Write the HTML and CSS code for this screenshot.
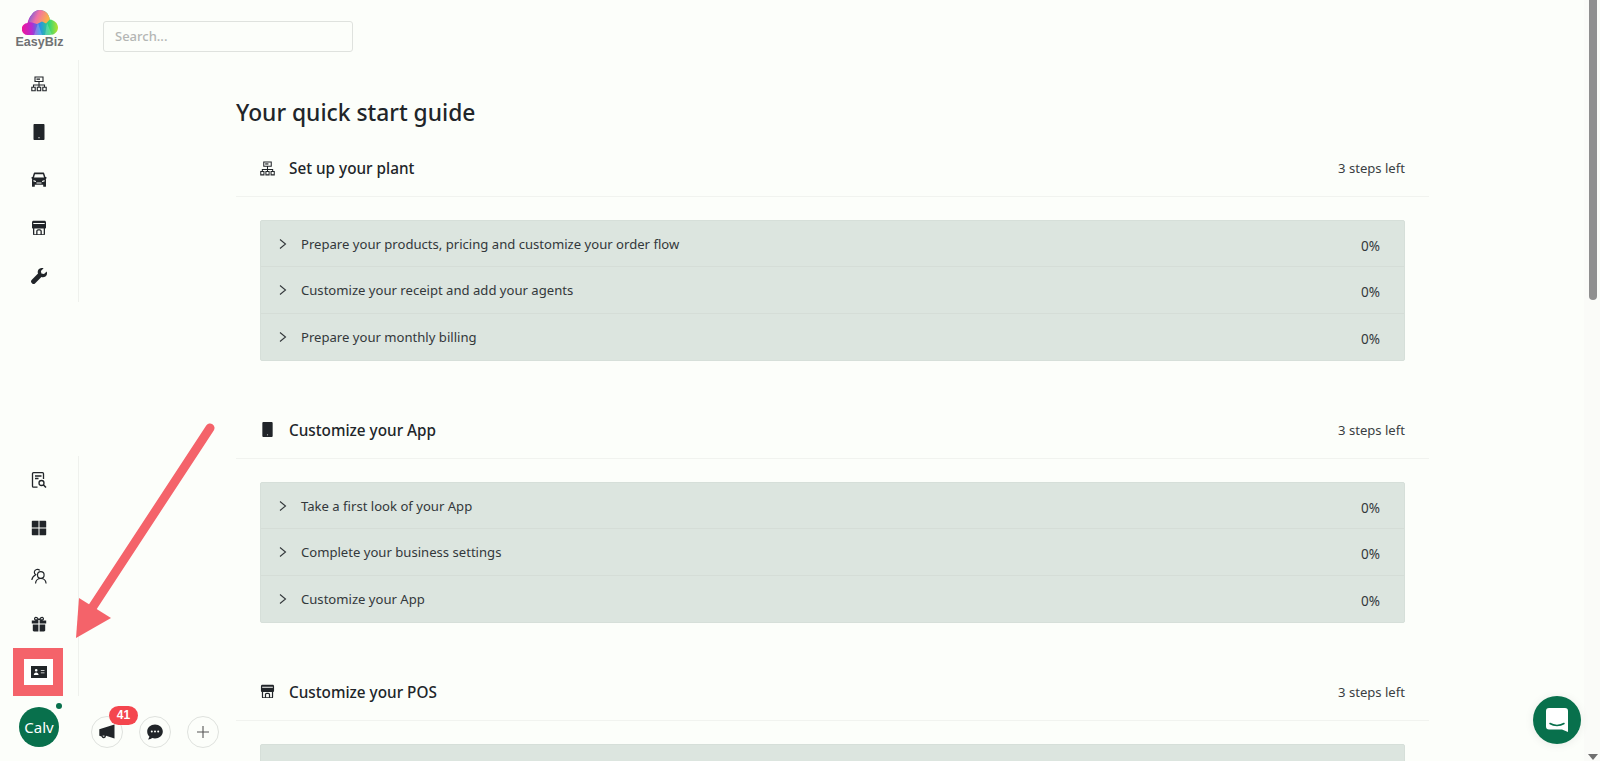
FILE: index.html
```html
<!DOCTYPE html>
<html lang="en">
<head>
    <meta charset="UTF-8">
    <meta name="viewport" content="width=device-width, initial-scale=1.0">
    <title>EasyBiz - Your quick start guide</title>
    <link rel="stylesheet" href="styles.css">
</head>
<body>
    <svg class="icon-defs" width="0" height="0">
        <defs>
            <linearGradient id="cloud-fill" x1="0" y1="0" x2="1" y2="0">
                <stop offset="0" stop-color="#f0169a"/>
                <stop offset="0.28" stop-color="#b62bd0"/>
                <stop offset="0.5" stop-color="#2a8fe8"/>
                <stop offset="0.75" stop-color="#2fd67a"/>
                <stop offset="1" stop-color="#b9e02c"/>
            </linearGradient>
            <linearGradient id="cloud-top" x1="0" y1="0" x2="1" y2="0.3">
                <stop offset="0" stop-color="#4a5be8"/>
                <stop offset="0.5" stop-color="#f26fa6"/>
                <stop offset="1" stop-color="#f9b04a"/>
            </linearGradient>
            <symbol id="i-plant" viewBox="0 0 16 16">
                <path fill="none" stroke="currentColor" stroke-width="1.100" d="M4 1h8v4.500H4zM8 5.500V9M2.500 11V9h11v2M8 9v2M.8 11.200h3.400v3.600H.8zM6.300 11.200h3.400v3.600H6.300zM11.800 11.200h3.400v3.600h-3.400z"/>
                <path fill="currentColor" d="M5.500 2.500h3.500v1.300H5.500z"/>
            </symbol>
            <symbol id="i-phone" viewBox="0 0 16 16">
                <path fill="currentColor" fill-rule="evenodd" d="M3.500 0h9c.6 0 1 .4 1 1v14c0 .6-.4 1-1 1h-9c-.6 0-1-.4-1-1V1c0-.6.4-1 1-1zM7.400 13.200v1h1.200v-1z"/>
            </symbol>
            <symbol id="i-car" viewBox="0 0 16 16">
                <path transform="translate(0 -2.750) scale(1 1.300)" fill="currentColor" fill-rule="evenodd" d="M3.900 2.500h8.200c.6 0 1.100.4 1.300.9l1 2.600h1v1.200l-.6.300c.2.400.2.700.2 1.100v4.400c0 .3-.2.500-.5.500h-1.800c-.3 0-.5-.2-.5-.5V12H3.800v1c0 .3-.2.500-.5.500H1.500c-.3 0-.5-.2-.5-.5V8.600c0-.4 0-.7.200-1.100L.6 7.200V6h1l1-2.600c.2-.5.7-.9 1.300-.9zM4 3.800 3 6.400h10l-1-2.600zM2.500 8.200v1.200l2.500.4V9zM13.500 8.200 11 9v.8l2.500-.4zM5.500 10.200v.8h5v-.8z"/>
            </symbol>
            <symbol id="i-store" viewBox="0 0 16 16">
                <path fill="currentColor" fill-rule="evenodd" d="M2.500 .8h11c.8 0 1.500.7 1.500 1.500v5.200c0 .6-.4 1-1 1v5.500c0 .6-.4 1-1 1H3c-.6 0-1-.4-1-1V8.500c-.6 0-1-.4-1-1V2.300C1 1.500 1.700.8 2.500.8zM2.300 3v.9h11.400V3zM3.300 8.500v5.700h1.900v-2.900c0-1 .8-2 2-2h1.600c1.200 0 2 1 2 2v2.900h1.900V8.500zM6.500 11.300v2.900h3v-2.900c0-.4-.3-.7-.7-.7H7.200c-.4 0-.7.300-.7.700z"/>
            </symbol>
            <symbol id="i-wrench" viewBox="0 0 16 16">
                <path fill="currentColor" d="M15.700 3.400 13 6.100l-2.600-.5-.5-2.600L12.600.3C10.700-.4 8.600.1 7.500 1.600 6.600 2.800 6.500 4.300 7 5.600L.6 12c-.8.800-.8 2 0 2.800l.6.600c.8.800 2 .8 2.800 0l6.400-6.400c1.300.5 2.800.4 4-.5 1.500-1.100 2-3.200 1.300-5.100z"/>
            </symbol>
            <symbol id="i-report" viewBox="0 0 16 16">
                <path fill="none" stroke="currentColor" stroke-width="1.300" d="M6.500 15.200H2.500a1 1 0 0 1-1-1V1.700a1 1 0 0 1 1-1h9a1 1 0 0 1 1 1V7"/>
                <path fill="none" stroke="currentColor" stroke-width="1.300" d="M4 4h6.500M4 6.500h3.500"/>
                <circle cx="10.500" cy="11" r="2.500" fill="none" stroke="currentColor" stroke-width="1.300"/>
                <path fill="none" stroke="currentColor" stroke-width="1.500" d="m12.300 12.800 2.700 2.700"/>
            </symbol>
            <symbol id="i-grid" viewBox="0 0 16 16">
                <path fill="currentColor" d="M.8 1.500c0-.4.300-.7.700-.7h6v6.700H.8zM8.500.8h6c.4 0 .7.300.7.700v6H8.500zM.8 8.500h6.700v6.700h-6c-.4 0-.7-.3-.7-.7zM8.500 8.500h6.700v6c0 .4-.3.700-.7.700h-6z"/>
            </symbol>
            <symbol id="i-users" viewBox="0 0 16 16">
                <g fill="none" stroke="currentColor" stroke-width="1.200">
                    <circle cx="9.800" cy="7" r="3.300"/>
                    <path d="M4.500 15.500c.3-3 2.400-5 5.300-5s5 2 5.300 5"/>
                    <path d="M8.800 2.400A3.200 3.200 0 0 0 3.300 4c0 1.200.6 2.100 1.400 2.700C2.600 7.700 1.200 9.500.8 12"/>
                </g>
            </symbol>
            <symbol id="i-gift" viewBox="0 0 16 16">
                <path fill="currentColor" fill-rule="evenodd" d="M.8 4.500h6.600v3H.8zM8.600 4.500h6.600v3H8.600zM1.800 8.500h5.600v7H3c-.7 0-1.200-.5-1.200-1.200zM8.600 8.500h5.600v5.800c0 .7-.5 1.200-1.200 1.200H8.600zM8 4l-1.400.5H4.800C3.600 4.500 3 3.700 3 2.800S3.700.8 4.800.8C6.300.8 7.400 2 8 3.200 8.600 2 9.700.8 11.200.8 12.300.8 13 1.900 13 2.800s-.6 1.700-1.800 1.700H9.400zM4.800 2c-.4 0-.6.400-.6.800s.2.500.6.500h1.700C6.100 2.700 5.500 2 4.800 2zM11.200 2c-.7 0-1.300.7-1.700 1.300h1.700c.4 0 .6-.1.600-.5s-.2-.8-.6-.8z"/>
            </symbol>
            <symbol id="i-card" viewBox="0 0 16 12">
                <path fill="currentColor" fill-rule="evenodd" d="M0 0h16v12H0zM5.200 3a1.300 1.300 0 1 0 0 2.600 1.300 1.300 0 0 0 0-2.600zM2.800 9h4.800C7.500 7.500 6.500 6.400 5.200 6.400S2.900 7.500 2.800 9zM9.800 4.200v.8h3.700v-.8zM9.800 6.500v.8h3.700v-.8z"/>
            </symbol>
            <symbol id="i-horn" viewBox="0 0 16 16">
                <path fill="currentColor" fill-rule="evenodd" d="M15.500 .5v14L7 11.800v.2a2.300 2.300 0 0 1-4.500.6L.3 11.800V5.300zM3.700 11.500c0 .3 0 .5.100.7a1.100 1.100 0 0 0 2-.5z"/>
            </symbol>
            <symbol id="i-dots" viewBox="0 0 16 16">
                <path fill="currentColor" fill-rule="evenodd" d="M8 .5c4.300 0 7.800 3 7.800 7S12.300 14.500 8 14.500c-1 0-2-.2-2.800-.5-.9.700-2.300 1.400-4.200 1.500.7-.8 1.300-2 1.400-3C.9 11.300.2 9.500.2 7.500.2 3.500 3.700.5 8 .5zM4.800 6.600a1 1 0 1 0 0 2 1 1 0 0 0 0-2zM8 6.600a1 1 0 1 0 0 2 1 1 0 0 0 0-2zM11.200 6.600a1 1 0 1 0 0 2 1 1 0 0 0 0-2z"/>
            </symbol>
            <symbol id="i-chev" viewBox="0 0 8 10">
                <path fill="none" stroke="currentColor" stroke-width="1.100" d="m1 .5 5.500 4.500L1 9.500"/>
            </symbol>
        </defs>
    </svg>

    <aside class="sidebar">
        <div class="logo">
            <svg class="logo-cloud" viewBox="0 0 36 25">
                <path fill="url(#cloud-fill)" d="M6 25a6 6 0 0 1-.5-12C6.500 9 8 6.500 9.500 5 11.500 1.800 14.500 0 18 0c5 0 8.800 3.500 9.800 9.500C32.500 10 36 13.500 36 17.500c0 4.300-3.500 7.500-8 7.500z"/>
                <path fill="url(#cloud-top)" d="M9.500 5C11.500 1.800 14.500 0 18 0c5 0 8.800 3.500 9.800 9.500l-3.800 4-4-2-5 2.500-5-1.500-3.500-.5C7 9.500 8 6.500 9.500 5z"/>
                <path fill="#fff" opacity="0.2" d="M12 25 16 13l4 12zM23 25l2-12 5 12z"/>
            </svg>
            <span class="logo-name">EasyBiz</span>
        </div>
        <nav class="side-nav side-nav-top">
            <a class="side-item"><svg class="side-icon"><use href="#i-plant"/></svg></a>
            <a class="side-item"><svg class="side-icon"><use href="#i-phone"/></svg></a>
            <a class="side-item"><svg class="side-icon"><use href="#i-car"/></svg></a>
            <a class="side-item"><svg class="side-icon"><use href="#i-store"/></svg></a>
            <a class="side-item"><svg class="side-icon"><use href="#i-wrench"/></svg></a>
        </nav>
        <nav class="side-nav side-nav-bottom">
            <a class="side-item"><svg class="side-icon"><use href="#i-report"/></svg></a>
            <a class="side-item"><svg class="side-icon"><use href="#i-grid"/></svg></a>
            <a class="side-item"><svg class="side-icon"><use href="#i-users"/></svg></a>
            <a class="side-item"><svg class="side-icon"><use href="#i-gift"/></svg></a>
            <a class="side-item"><span class="mark"></span><svg class="side-icon card-icon"><use href="#i-card"/></svg></a>
        </nav>
        <div class="avatar-row">
            <div class="avatar">Calv<span class="avatar-dot"></span></div>
        </div>
    </aside>

    <div class="page">
        <div class="topbar">
            <input class="search" type="text" placeholder="Search...">
        </div>
        <main class="guide">
            <h1>Your quick start guide</h1>

            <section class="guide-section">
                <div class="section-head">
                    <svg class="head-icon"><use href="#i-plant"/></svg>
                    <h2>Set up your plant</h2>
                    <span class="steps">3 steps left</span>
                </div>
                <div class="step-list">
                    <div class="step"><svg class="chev"><use href="#i-chev"/></svg><span class="step-name">Prepare your products, pricing and customize your order flow</span><span class="pct">0%</span></div>
                    <div class="step"><svg class="chev"><use href="#i-chev"/></svg><span class="step-name">Customize your receipt and add your agents</span><span class="pct">0%</span></div>
                    <div class="step"><svg class="chev"><use href="#i-chev"/></svg><span class="step-name">Prepare your monthly billing</span><span class="pct">0%</span></div>
                </div>
            </section>

            <section class="guide-section">
                <div class="section-head">
                    <svg class="head-icon"><use href="#i-phone"/></svg>
                    <h2>Customize your App</h2>
                    <span class="steps">3 steps left</span>
                </div>
                <div class="step-list">
                    <div class="step"><svg class="chev"><use href="#i-chev"/></svg><span class="step-name">Take a first look of your App</span><span class="pct">0%</span></div>
                    <div class="step"><svg class="chev"><use href="#i-chev"/></svg><span class="step-name">Complete your business settings</span><span class="pct">0%</span></div>
                    <div class="step"><svg class="chev"><use href="#i-chev"/></svg><span class="step-name">Customize your App</span><span class="pct">0%</span></div>
                </div>
            </section>

            <section class="guide-section">
                <div class="section-head">
                    <svg class="head-icon"><use href="#i-store"/></svg>
                    <h2>Customize your POS</h2>
                    <span class="steps">3 steps left</span>
                </div>
                <div class="step-list">
                    <div class="step"></div>
                </div>
            </section>
        </main>
    </div>

    <div class="scrollbar">
        <span class="scroll-thumb"></span>
        <span class="scroll-down"></span>
    </div>

    <div class="quick-actions">
        <button class="round-btn"><svg class="round-icon"><use href="#i-horn"/></svg><span class="badge">41</span></button>
        <button class="round-btn"><svg class="round-icon"><use href="#i-dots"/></svg></button>
        <button class="round-btn">
            <svg class="round-icon" viewBox="0 0 16 16"><path fill="none" stroke="#555" stroke-width="1.100" d="M8 2v12M2 8h12"/></svg>
        </button>
    </div>

    <button class="chat-bubble">
        <svg width="22" height="24" viewBox="0 0 22 24">
            <path fill="#fff" d="M3 0h16a3 3 0 0 1 3 3v21l-6-2.500H3a3 3 0 0 1-3-3V3a3 3 0 0 1 3-3z"/>
            <path fill="none" stroke="#08704c" stroke-width="1.500" stroke-linecap="round" d="M4 15.500c4 2.500 10 2.500 14 0"/>
        </svg>
    </button>

    <svg class="arrow" width="240" height="260" viewBox="0 0 240 260">
        <path fill="none" stroke="#f4636a" stroke-width="9" stroke-linecap="round" d="M92 198 210 18"/>
        <path fill="#f4636a" d="M79 188 111 208 76 228z"/>
    </svg>
</body>
</html>
```

FILE: styles.css
```css
html, body {
    height: 100%;
}
body {
    margin: 0;
    display: flex;
    overflow: hidden;
    position: relative;
    background-color: #fcfefa;
    color: #212529;
    font-family: "Noto Sans", Arial, sans-serif;
    font-size: 13.1px;
}
.icon-defs {
    position: absolute;
}

/* left rail */
.sidebar {
    width: 79px;
    flex-shrink: 0;
    display: flex;
    flex-direction: column;
}
.logo {
    height: 60px;
    display: flex;
    flex-direction: column;
    align-items: center;
    padding-top: 10px;
    box-sizing: border-box;
}
.logo-cloud {
    width: 36px;
    height: 25px;
}
.logo-name {
    font-family: "Liberation Sans", Arial, sans-serif;
    font-weight: 700;
    font-size: 12.5px;
    line-height: 14px;
    color: #707274;
}
.side-nav {
    border-right: 1px solid #eff1ed;
}
.side-nav-top {
    padding-bottom: 2px;
}
.side-nav-bottom {
    margin-top: auto;
}
.side-item {
    position: relative;
    height: 48px;
    display: flex;
    align-items: center;
    justify-content: center;
}
.side-icon {
    position: relative;
    width: 16px;
    height: 16px;
    color: #212529;
}
.card-icon {
    height: 12px;
}
.mark {
    position: absolute;
    left: 13px;
    top: 0;
    width: 50px;
    height: 48px;
    box-sizing: border-box;
    border: 11px solid #f4636a;
    border-right-width: 10px;
    background-color: #fff;
}
.avatar-row {
    height: 65px;
    padding: 11px 0 0 19px;
    box-sizing: border-box;
}
.avatar {
    position: relative;
    width: 40px;
    height: 40px;
    border-radius: 50%;
    background-color: #08704c;
    color: #fff;
    font-size: 15px;
    line-height: 40px;
    text-align: center;
}
.avatar-dot {
    position: absolute;
    right: -3px;
    top: -4px;
    width: 6px;
    height: 6px;
    border-radius: 50%;
    background-color: #08704c;
}

/* main column */
.page {
    flex: 1;
    min-width: 0;
}
.topbar {
    padding: 21px 0 0 24px;
    height: 69px;
    box-sizing: border-box;
}
.search {
    width: 250px;
    height: 31px;
    box-sizing: border-box;
    padding: 0 11px 2px;
    border: 1px solid #dfe2de;
    border-radius: 3px;
    background-color: #fcfefa;
    font-family: inherit;
    font-size: 13px;
    font-weight: 500;
}
.search::placeholder {
    color: #b4b6b4;
}
.guide {
    margin: 0 155px 0 157px;
}
h1 {
    margin: 0;
    height: 71px;
    padding-top: 27px;
    box-sizing: border-box;
    font-size: 22.8px;
    font-weight: 500;
    line-height: 34px;
}
.guide-section {
    margin-bottom: 41px;
}
.section-head {
    height: 57px;
    display: flex;
    align-items: center;
    padding: 0 24px;
    box-sizing: border-box;
    border-bottom: 1px solid #f1f3ef;
}
.head-icon {
    width: 15px;
    height: 15px;
    margin-right: 14px;
}
h2 {
    margin: 0;
    flex: 1;
    font-size: 15.3px;
    font-weight: 500;
}
.steps {
    font-size: 13.1px;
    color: #3a3f42;
}
.step-list {
    margin: 23px 24px 0;
    border: 1px solid #d6dfd9;
    border-radius: 2px;
    background-color: #dce5df;
}
.step {
    height: 46.33px;
    box-sizing: border-box;
    display: flex;
    align-items: center;
    padding: 0 24px 0 18px;
    border-bottom: 1px solid #d5ddd7;
    color: #33383b;
}
.step:last-child {
    border-bottom: 0;
}
.chev {
    width: 8px;
    height: 10px;
    margin-right: 14px;
}
.step-name {
    flex: 1;
}
.pct {
    margin-top: 4px;
    font-size: 13.5px;
}

/* fake page scrollbar */
.scrollbar {
    width: 16px;
    flex-shrink: 0;
    position: relative;
    background-color: #fafbf8;
}
.scroll-thumb {
    position: absolute;
    top: 0;
    left: 5px;
    width: 8px;
    height: 300px;
    border-radius: 0 0 4px 4px;
    background-color: #8f8f8f;
}
.scroll-down {
    position: absolute;
    bottom: 1px;
    left: 4px;
    border-left: 5px solid transparent;
    border-right: 5px solid transparent;
    border-top: 6px solid #6f6f6f;
}

/* things floating over the page */
.quick-actions {
    position: absolute;
    left: 91px;
    top: 716px;
    display: flex;
    gap: 16px;
}
.round-btn {
    position: relative;
    width: 32px;
    height: 32px;
    padding: 0;
    border: 1px solid #dfe2de;
    border-radius: 50%;
    background-color: #fcfefa;
    display: flex;
    align-items: center;
    justify-content: center;
    color: #212529;
}
.round-icon {
    width: 16px;
    height: 16px;
}
.badge {
    position: absolute;
    left: 17px;
    top: -11px;
    width: 29px;
    height: 19px;
    border-radius: 10px;
    background-color: #f4464e;
    color: #fff;
    font-size: 12px;
    font-weight: 600;
    line-height: 19px;
    text-align: center;
}
.chat-bubble {
    position: absolute;
    left: 1533px;
    top: 696px;
    width: 48px;
    height: 48px;
    padding: 0;
    border: 0;
    border-radius: 50%;
    background-color: #08704c;
    box-shadow: 0 1px 10px rgba(0,0,0,0.08);
    display: flex;
    align-items: center;
    justify-content: center;
}
.arrow {
    position: absolute;
    left: 0;
    top: 410px;
    pointer-events: none;
}
```
